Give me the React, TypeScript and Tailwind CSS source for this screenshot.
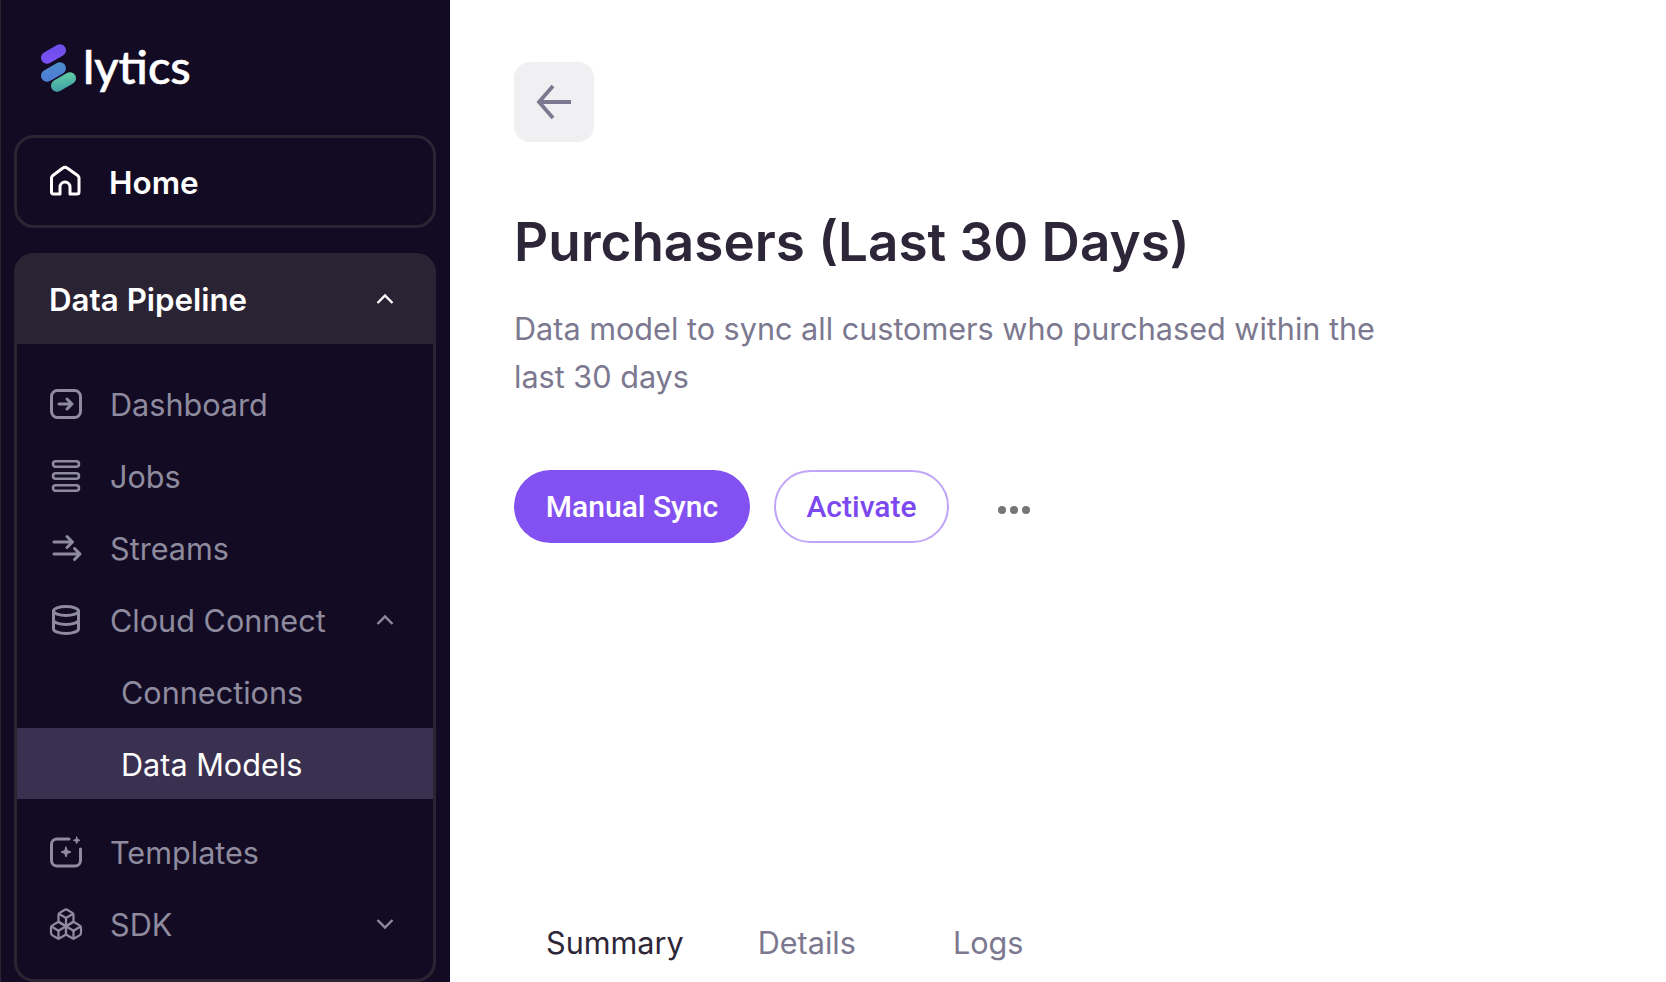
import React from "react";
import { Boxes } from "lucide-react";

const Chevron = ({ down = false, color = "#8f8b9f", right = "mr-[39px]" }: { down?: boolean; color?: string; right?: string }) => (
    <svg width="18" height="12" viewBox="0 0 18 12" fill="none" stroke={color} strokeWidth="2.4" className={`ml-auto shrink-0 ${right}`}>
        <path d={down ? "M1.5 2 9 9.5 16.5 2" : "M1.5 10 9 2.5 16.5 10"} />
    </svg>
);

const IconBox = ({ children, sw = 3 }: { children: React.ReactNode; sw?: number }) => (
    <svg width="36" height="36" viewBox="0 0 36 36" fill="none" stroke="currentColor" strokeWidth={sw} strokeLinecap="round" strokeLinejoin="round" className="shrink-0">
        {children}
    </svg>
);

const DashboardIcon = () => (
    <IconBox>
        <rect x="3.5" y="4.5" width="29" height="27" rx="6" />
        <path d="M11 18h13M19 13l5 5-5 5" />
    </IconBox>
);

const JobsIcon = () => (
    <IconBox sw={2.6}>
        <rect x="5" y="3.2" width="26" height="5.6" rx="2.8" />
        <rect x="5" y="15.2" width="26" height="5.6" rx="2.8" />
        <rect x="5" y="27.2" width="26" height="5.6" rx="2.8" />
    </IconBox>
);

const StreamsIcon = () => (
    <IconBox>
        <path d="M6 12h18M19 6.5l5.5 5.5-5.5 5.5" />
        <path d="M6 24h26M26.5 18.5l5.5 5.5-5.5 5.5" />
    </IconBox>
);

const DatabaseIcon = () => (
    <IconBox>
        <ellipse cx="18" cy="9" rx="12.5" ry="4.5" />
        <path d="M5.5 9v18c0 2.5 5.6 4.5 12.5 4.5s12.5-2 12.5-4.5V9" />
        <path d="M5.5 18c0 2.5 5.6 4.5 12.5 4.5s12.5-2 12.5-4.5" />
    </IconBox>
);

const TemplatesIcon = () => (
    <IconBox>
        <path d="M21 5H9a5.5 5.5 0 0 0-5.5 5.5v16A5.5 5.5 0 0 0 9 32h18a5.5 5.5 0 0 0 5.5-5.5V15" />
        <path d="M18 13l1.4 3.6L23 18l-3.6 1.4L18 23l-1.4-3.6L13 18l3.6-1.4z" fill="currentColor" strokeWidth="1" />
        <path d="M28.7 3l.9 2.4 2.4.9-2.4.9-.9 2.4-.9-2.4-2.4-.9 2.4-.9z" fill="currentColor" strokeWidth="1" />
    </IconBox>
);

const Row = ({ icon, label, chevron }: { icon: React.ReactNode; label: string; chevron?: "up" | "down" }) => (
    <div className="flex h-[72px] items-center pl-[31px] text-[#8f8b9f]">
        <span className="flex w-[36px] justify-center">{icon}</span>
        <span className="ml-[26px] pt-[2px]">{label}</span>
        {chevron && <Chevron down={chevron === "down"} />}
    </div>
);

export default function App() {
    return (
        <div className="flex h-[982px] w-[1666px] overflow-hidden bg-white font-['Inter',sans-serif] text-[30.6px]">
            {/* Sidebar */}
            <aside className="flex h-full w-[450px] shrink-0 flex-col border-l border-[#2a2433] bg-[#130b23] pl-[13px] pr-[14px]">
                <div className="flex h-[135px] shrink-0 items-start pl-[24px] pt-[40px]">
                    <svg width="42" height="50" viewBox="0 0 42 50" className="mt-[3px]">
                        <defs>
                            <linearGradient id="g1" x1="0" y1="1" x2="1" y2="0">
                                <stop offset="0" stopColor="#7d4ff5" />
                                <stop offset="1" stopColor="#6b4fe8" />
                            </linearGradient>
                            <linearGradient id="g2" x1="0" y1="1" x2="1" y2="0">
                                <stop offset="0" stopColor="#4f78d8" />
                                <stop offset="1" stopColor="#4b90c9" />
                            </linearGradient>
                            <linearGradient id="g3" x1="0" y1="1" x2="1" y2="0">
                                <stop offset="0" stopColor="#3f9aa8" />
                                <stop offset="1" stopColor="#62d3a4" />
                            </linearGradient>
                        </defs>
                        <rect x="0" y="-6" width="27" height="12" rx="6" fill="url(#g1)" transform="translate(2 11) rotate(-30 13.5 0)" />
                        <rect x="0" y="-6" width="27" height="12" rx="6" fill="url(#g2)" transform="translate(2 29) rotate(-30 13.5 0)" />
                        <rect x="0" y="-6" width="27" height="12" rx="6" fill="url(#g3)" transform="translate(12 39) rotate(-30 13.5 0)" />
                    </svg>
                    <span className="-mt-[4px] ml-[3px] font-['Lato',sans-serif] text-[47px] leading-[60px] font-medium text-white [-webkit-text-stroke:0.6px_white]">lytics</span>
                </div>

                <div className="flex h-[93px] shrink-0 items-center rounded-[20px] border-[3px] border-[#2a2433] pl-[31px] text-[31.5px] font-semibold text-white">
                    <span className="flex w-[36px] justify-center">
                        <IconBox>
                            <path d="M5 30h7v-7a5 5 0 0 1 10 0v7h7a2 2 0 0 0 2-2V14a3 3 0 0 0-1-2.2L19.5 4.3a4 4 0 0 0-5 0L4.5 11.8a3 3 0 0 0-1 2.2v14a2 2 0 0 0 1.5 2z" />
                        </IconBox>
                    </span>
                    <span className="ml-[25px] pt-[2px]">Home</span>
                </div>

                <div className="mt-[25px] flex flex-1 flex-col rounded-[20px] border-[3px] border-t-0 border-[#2a2433]">
                    <div className="-mx-[3px] flex h-[91px] shrink-0 items-center rounded-t-[20px] bg-[#2a2333] pl-[35px] text-[31.3px] font-semibold text-white">
                        <span className="pt-[3px]">Data Pipeline</span>
                        <Chevron color="#ffffff" right="mr-[42px]" />
                    </div>
                    <nav className="pt-[24px]">
                        <Row icon={<DashboardIcon />} label="Dashboard" />
                        <Row icon={<JobsIcon />} label="Jobs" />
                        <Row icon={<StreamsIcon />} label="Streams" />
                        <Row icon={<DatabaseIcon />} label="Cloud Connect" chevron="up" />
                        <div className="flex h-[72px] items-center pl-[104px] pt-[2px] text-[#8f8b9f]">Connections</div>
                        <div className="flex h-[71px] items-center bg-[#3a304f] pl-[104px] pt-[2px] text-white">Data Models</div>
                        <div className="mt-[17px]">
                            <Row icon={<TemplatesIcon />} label="Templates" />
                            <Row icon={<Boxes size={36} strokeWidth={1.5} />} label="SDK" chevron="down" />
                        </div>
                    </nav>
                </div>
            </aside>

            {/* Main */}
            <main className="flex-1 pl-[64px] pt-[62px]">
                <button className="flex h-[80px] w-[80px] items-center justify-center rounded-[16px] bg-[#f0f0f2] text-[#7b7890]">
                    <svg width="36" height="36" viewBox="0 0 36 36" fill="none" stroke="currentColor" strokeWidth="3.8">
                        <path d="M35 18H3M17 2 3 18l14 16" />
                    </svg>
                </button>

                <h1 className="mt-[69px] text-[53px] leading-[62px] font-semibold text-[#2d2639]">Purchasers (Last 30 Days)</h1>
                <p className="mt-[32px] w-[900px] leading-[48px] text-[#7b7890]">
                    Data model to sync all customers who purchased within the last 30 days
                </p>

                <div className="mt-[69px] flex h-[73px] items-center font-['Roboto',sans-serif] text-[30px] font-medium">
                    <button className="h-[73px] w-[236px] rounded-full bg-[#8350f2] text-white">Manual Sync</button>
                    <button className="ml-[24px] h-[73px] w-[175px] rounded-full border-2 border-[#c0a4f8] text-[#7c48f0]">Activate</button>
                    <div className="ml-[49px] mt-[7px] flex gap-[4px]">
                        <span className="h-[8px] w-[8px] rounded-full bg-[#757575]" />
                        <span className="h-[8px] w-[8px] rounded-full bg-[#757575]" />
                        <span className="h-[8px] w-[8px] rounded-full bg-[#757575]" />
                    </div>
                </div>

                <div className="mt-[376px] flex pl-[32px] leading-[48px] text-[#7b7890]">
                    <span className="text-[#2d2639]">Summary</span>
                    <span className="ml-[74px]">Details</span>
                    <span className="ml-[97px]">Logs</span>
                </div>
            </main>
        </div>
    );
}
